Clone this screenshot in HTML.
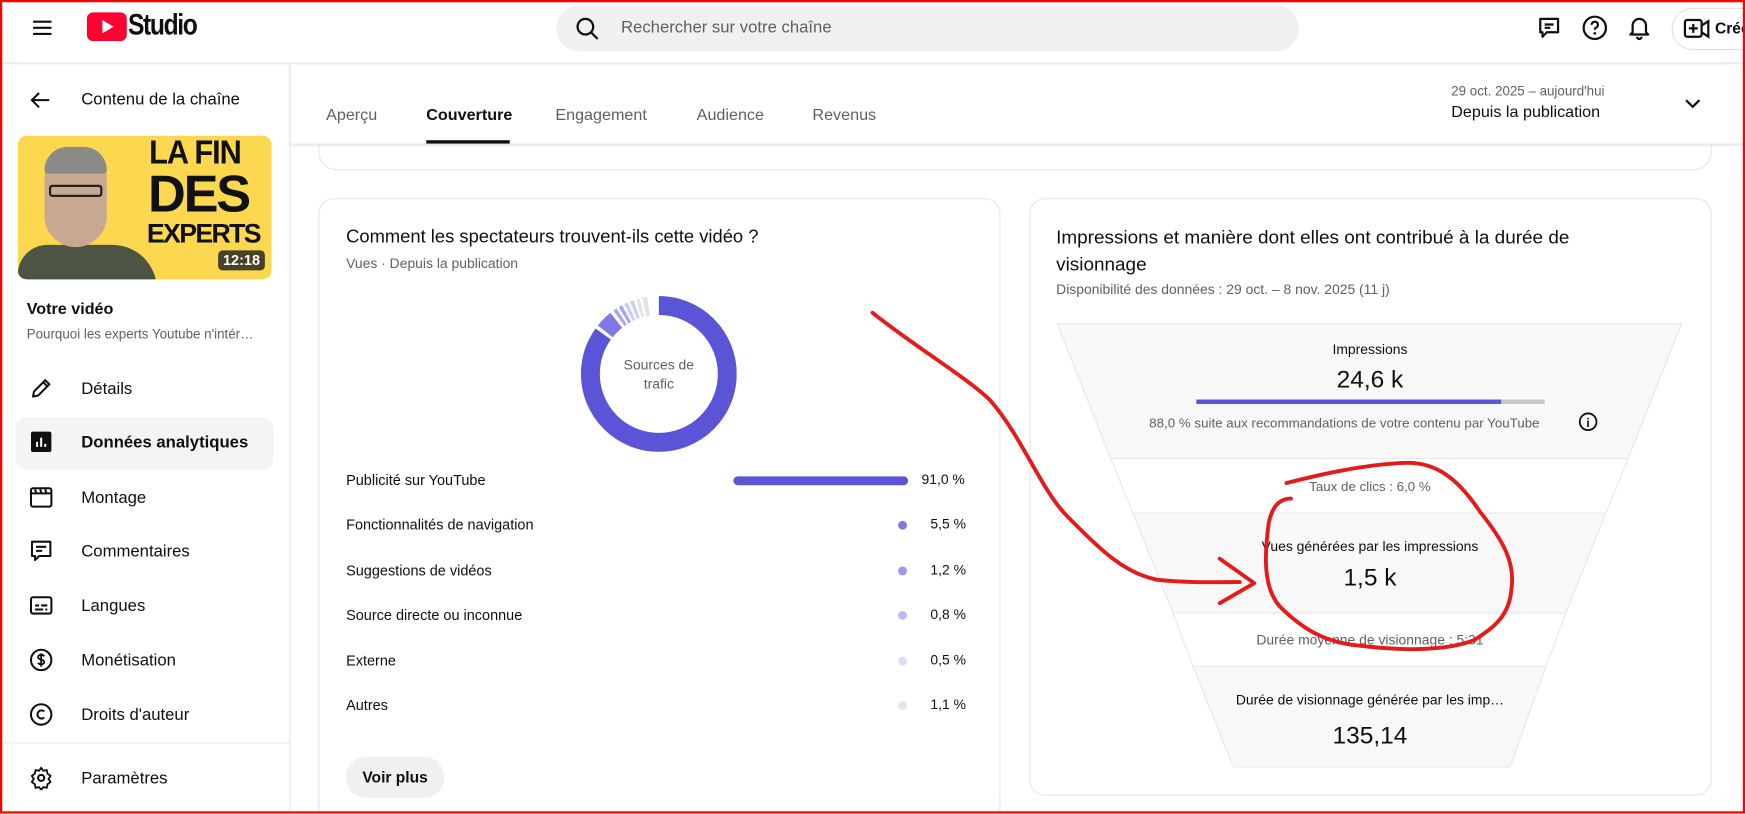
<!DOCTYPE html>
<html><head><meta charset="utf-8">
<style>
*{margin:0;padding:0;box-sizing:border-box}
html,body{width:1745px;height:814px;overflow:hidden;background:#fff}
#w{position:absolute;left:0;top:0;width:1568px;height:731px;transform:scale(1.1129);transform-origin:0 0;font-family:"Liberation Sans",Arial,sans-serif;color:#0f0f0f;background:#fff;overflow:hidden}
.a{position:absolute;white-space:nowrap}
.ic{position:absolute}
.nav{font-size:15px;color:#0f0f0f}
.tab{font-size:14.5px;color:#606060;top:96px}
.card{position:absolute;border:1px solid #e5e5e5;border-radius:14px;background:#fff}
.row{font-size:13px;color:#0f0f0f;left:311px}
.pct{font-size:12.5px;color:#0f0f0f;right:702px;text-align:right}
.dot{position:absolute;width:8px;height:8px;border-radius:50%;left:807px}
</style></head><body><div id="w">

<!-- header -->
<div class="a" style="left:0;top:0;width:1568px;height:57px;border-bottom:1px solid #e8e8e8;box-shadow:0 1px 3px rgba(0,0,0,.08)"></div>
<svg class="ic" style="left:27px;top:14px" width="22" height="22" viewBox="0 0 24 24"><path d="M3 6h18M3 12h18M3 18h18" stroke="#0f0f0f" stroke-width="2"/></svg>
<svg class="ic" style="left:78px;top:11px" width="36" height="26" viewBox="0 0 36 26"><rect width="36" height="26" rx="6" fill="#ff0033"/><path d="M14 7l10 6-10 6z" fill="#fff"/></svg>
<div class="a" style="left:115px;top:7px;font-size:27px;font-weight:bold;letter-spacing:-1.5px;transform:scaleX(.82);transform-origin:0 0">Studio</div>
<div class="a" style="left:500px;top:5px;width:667px;height:41px;border-radius:21px;background:#f0f0f0"></div>
<svg class="ic" style="left:516px;top:14px" width="24" height="24" viewBox="0 0 24 24"><circle cx="10" cy="10" r="7" stroke="#0f0f0f" stroke-width="2" fill="none"/><path d="M15 15l6 6" stroke="#0f0f0f" stroke-width="2"/></svg>
<div class="a" style="left:558px;top:16px;font-size:15px;color:#606060">Rechercher sur votre chaîne</div>
<svg class="ic" style="left:1380px;top:13px" width="24" height="24" viewBox="0 0 24 24"><path d="M4 4h16v12H10l-4 4v-4H4z" fill="none" stroke="#0f0f0f" stroke-width="2" stroke-linejoin="round"/><path d="M8 9h8M8 12h5" stroke="#0f0f0f" stroke-width="2"/></svg>
<svg class="ic" style="left:1421px;top:13px" width="24" height="24" viewBox="0 0 24 24"><circle cx="12" cy="12" r="10" fill="none" stroke="#0f0f0f" stroke-width="2"/><path d="M9.2 9.3a2.8 2.8 0 1 1 3.8 2.6c-.8.4-1 1-1 1.8" fill="none" stroke="#0f0f0f" stroke-width="2"/><circle cx="12" cy="17" r="1.2" fill="#0f0f0f"/></svg>
<svg class="ic" style="left:1461px;top:12px" width="24" height="26" viewBox="0 0 24 26"><path d="M6 17V11a6 6 0 0 1 12 0v6l2 2H4z" fill="none" stroke="#0f0f0f" stroke-width="2" stroke-linejoin="round"/><path d="M10 21a2 2 0 0 0 4 0" fill="none" stroke="#0f0f0f" stroke-width="2"/></svg>
<div class="a" style="left:1502px;top:7px;width:90px;height:38px;border:1px solid #e0e0e0;border-radius:19px"></div>
<svg class="ic" style="left:1512px;top:15px" width="26" height="22" viewBox="0 0 26 22"><rect x="2" y="3" width="15" height="15" rx="2" fill="none" stroke="#0f0f0f" stroke-width="2"/><path d="M17 8l6-4v14l-6-4M9.5 6.5v8M5.5 10.5h8" fill="none" stroke="#0f0f0f" stroke-width="2"/></svg>
<div class="a" style="left:1541px;top:17px;font-size:14px;font-weight:bold">Créer</div>

<!-- sidebar -->
<div class="a" style="left:260px;top:57px;width:1px;height:680px;background:#e5e5e5"></div>
<svg class="ic" style="left:25px;top:79px" width="22" height="22" viewBox="0 0 24 24"><path d="M21 12H4M11 5l-7 7 7 7" fill="none" stroke="#0f0f0f" stroke-width="2"/></svg>
<div class="a" style="left:73px;top:81px;font-size:15px">Contenu de la chaîne</div>
<div class="a" style="left:16px;top:122px;width:228px;height:129px;border-radius:8px;background:#fbd84f;overflow:hidden">
 <div style="position:absolute;left:0;top:98px;width:125px;height:40px;background:#4c5443;border-radius:40px 60px 0 0"></div>
 <div style="position:absolute;left:24px;top:14px;width:56px;height:86px;background:#c9a892;border-radius:26px 26px 30px 30px"></div>
 <div style="position:absolute;left:24px;top:10px;width:56px;height:24px;background:#8a8a86;border-radius:26px 26px 4px 4px"></div>
 <div style="position:absolute;left:28px;top:44px;width:48px;height:11px;border:2px solid #222;border-radius:3px"></div>
 <div style="position:absolute;left:118px;top:2px;font:900 30px/27px 'Liberation Sans',sans-serif;color:#111;letter-spacing:-1px;transform:scaleX(.92);transform-origin:0 0">LA FIN</div>
 <div style="position:absolute;left:117px;top:30px;font:900 47px/44px 'Liberation Sans',sans-serif;color:#111;letter-spacing:-2px">DES</div>
 <div style="position:absolute;left:116px;top:76px;font:900 24px/26px 'Liberation Sans',sans-serif;color:#111;letter-spacing:-1.5px">EXPERTS</div>
 <div style="position:absolute;left:180px;top:103px;width:42px;height:18px;background:rgba(40,40,30,.85);border-radius:4px;color:#fff;font:bold 13px/18px 'Liberation Sans',sans-serif;text-align:center">12:18</div>
</div>
<div class="a" style="left:24px;top:270px;font-size:14.5px;font-weight:bold">Votre vidéo</div>
<div class="a" style="left:24px;top:293px;font-size:12px;color:#606060">Pourquoi les experts Youtube n'intér…</div>
<div class="a" style="left:14px;top:375px;width:232px;height:47px;background:#f4f4f4;border-radius:10px"></div>
<svg class="ic" style="left:26px;top:338px" width="22" height="22" viewBox="0 0 24 24"><path d="M4 20l1-5L16 4l4 4L9 19z M14 6l4 4" fill="none" stroke="#0f0f0f" stroke-width="2" stroke-linejoin="round"/></svg>
<div class="a nav" style="left:73px;top:341px">Détails</div>
<svg class="ic" style="left:26px;top:386px" width="22" height="22" viewBox="0 0 24 24"><rect x="2" y="2" width="20" height="20" rx="2" fill="#0f0f0f"/><path d="M8 17v-5M12 17V8M16 17v-3" stroke="#fff" stroke-width="2"/></svg>
<div class="a nav" style="left:73px;top:389px;font-weight:bold">Données analytiques</div>
<svg class="ic" style="left:26px;top:436px" width="22" height="22" viewBox="0 0 24 24"><rect x="2" y="3" width="20" height="18" rx="2" fill="none" stroke="#0f0f0f" stroke-width="2"/><path d="M2 8h20M6 4l1 3M11 4l1 3M16 4l1 3" stroke="#0f0f0f" stroke-width="2"/></svg>
<div class="a nav" style="left:73px;top:439px">Montage</div>
<svg class="ic" style="left:26px;top:484px" width="22" height="22" viewBox="0 0 24 24"><path d="M3 3h18v14H10l-4 4v-4H3z" fill="none" stroke="#0f0f0f" stroke-width="2" stroke-linejoin="round"/><path d="M7 8h10M7 12h6" stroke="#0f0f0f" stroke-width="2"/></svg>
<div class="a nav" style="left:73px;top:487px">Commentaires</div>
<svg class="ic" style="left:26px;top:533px" width="22" height="22" viewBox="0 0 24 24"><rect x="2" y="4" width="20" height="16" rx="2" fill="none" stroke="#0f0f0f" stroke-width="2"/><path d="M6 12h4M12 12h6M6 16h8M16 16h2" stroke="#0f0f0f" stroke-width="2"/></svg>
<div class="a nav" style="left:73px;top:536px">Langues</div>
<svg class="ic" style="left:26px;top:582px" width="22" height="22" viewBox="0 0 24 24"><circle cx="12" cy="12" r="10" fill="none" stroke="#0f0f0f" stroke-width="2"/><path d="M15 8.5c-.5-1-1.5-1.5-3-1.5-2 0-3 1-3 2.3 0 3 6 1.7 6 4.7 0 1.3-1.2 2.3-3 2.3-1.5 0-2.6-.6-3.1-1.6M12 5.5v13" fill="none" stroke="#0f0f0f" stroke-width="1.8"/></svg>
<div class="a nav" style="left:73px;top:585px">Monétisation</div>
<svg class="ic" style="left:26px;top:631px" width="22" height="22" viewBox="0 0 24 24"><circle cx="12" cy="12" r="10" fill="none" stroke="#0f0f0f" stroke-width="2"/><path d="M15 9a4 4 0 1 0 0 6" fill="none" stroke="#0f0f0f" stroke-width="2"/></svg>
<div class="a nav" style="left:73px;top:634px">Droits d'auteur</div>
<div class="a" style="left:0;top:667px;width:260px;height:1px;background:#e5e5e5"></div>
<svg class="ic" style="left:26px;top:688px" width="22" height="22" viewBox="0 0 24 24"><path d="M12 2l2 3 3.5-.7.7 3.5 3 2.2-2 3 2 3-3 2.2-.7 3.5-3.5-.7-2 3-2-3-3.5.7-.7-3.5-3-2.2 2-3-2-3 3-2.2.7-3.5L10 5z" fill="none" stroke="#0f0f0f" stroke-width="1.8" stroke-linejoin="round"/><circle cx="12" cy="12" r="3" fill="none" stroke="#0f0f0f" stroke-width="2"/></svg>
<div class="a nav" style="left:73px;top:691px">Paramètres</div>

<!-- partial card -->
<div class="card" style="left:286px;top:120px;width:1252px;height:33px;border-top:none;border-radius:0 0 16px 16px"></div>

<!-- tabs -->
<div class="a" style="left:261px;top:58px;width:1307px;height:72px;background:#fff;border-bottom:1px solid #e5e5e5;box-shadow:0 1px 3px rgba(0,0,0,.08)"></div>
<div class="a tab" style="left:293px">Aperçu</div>
<div class="a tab" style="left:383px;color:#0f0f0f;font-weight:bold">Couverture</div>
<div class="a" style="left:383px;top:126px;width:75px;height:3px;background:#0f0f0f"></div>
<div class="a tab" style="left:499px">Engagement</div>
<div class="a tab" style="left:626px">Audience</div>
<div class="a tab" style="left:730px">Revenus</div>
<div class="a" style="left:1304px;top:75px;font-size:12px;color:#606060">29 oct. 2025 – aujourd'hui</div>
<div class="a" style="left:1304px;top:93px;font-size:14.5px">Depuis la publication</div>
<svg class="ic" style="left:1512px;top:85px" width="18" height="16" viewBox="0 0 18 16"><path d="M3 5l6 6 6-6" fill="none" stroke="#0f0f0f" stroke-width="2"/></svg>

<!-- left card -->
<div class="card" style="left:286px;top:178px;width:613px;height:580px"></div>
<div class="a" style="left:311px;top:204px;font-size:16.5px">Comment les spectateurs trouvent-ils cette vidéo ?</div>
<div class="a" style="left:311px;top:230px;font-size:12.5px;color:#606060">Vues · Depuis la publication</div>
<svg class="ic" style="left:522px;top:266px" width="140" height="140" viewBox="-70 -70 140 140">
 <g transform="rotate(-90)">
 <circle r="61.5" fill="none" stroke="#5b54d6" stroke-width="17" stroke-dasharray="328 400" />
 <circle r="61.5" fill="none" stroke="#7e78e0" stroke-width="17" stroke-dasharray="0 331 14 400"/>
 <circle r="61.5" fill="none" stroke="#aaa6ec" stroke-width="17" stroke-dasharray="0 348 3 2 3 400"/>
 <circle r="61.5" fill="none" stroke="#cfcdf5" stroke-width="17" stroke-dasharray="0 358 3 2 3 400"/>
 <circle r="61.5" fill="none" stroke="#e4e4e8" stroke-width="17" stroke-dasharray="0 368 3 2 4 400"/>
 </g>
 <text x="0" y="-4" text-anchor="middle" font-family="Liberation Sans" font-size="12.5" fill="#606060">Sources de</text>
 <text x="0" y="13" text-anchor="middle" font-family="Liberation Sans" font-size="12.5" fill="#606060">trafic</text>
</svg>
<div class="a row" style="top:424px">Publicité sur YouTube</div>
<div class="a" style="left:659px;top:428px;width:157px;height:8px;border-radius:4px;background:#5b54d6"></div>
<div class="a pct" style="left:828px;top:424px">91,0 %</div>
<div class="a row" style="top:464px">Fonctionnalités de navigation</div><div class="dot" style="top:468px;background:#7e78e0"></div><div class="a pct" style="left:836px;top:464px">5,5 %</div>
<div class="a row" style="top:505px">Suggestions de vidéos</div><div class="dot" style="top:509px;background:#9d98e8"></div><div class="a pct" style="left:836px;top:505px">1,2 %</div>
<div class="a row" style="top:545px">Source directe ou inconnue</div><div class="dot" style="top:549px;background:#bcb9f0"></div><div class="a pct" style="left:836px;top:545px">0,8 %</div>
<div class="a row" style="top:586px">Externe</div><div class="dot" style="top:590px;background:#dddcf7"></div><div class="a pct" style="left:836px;top:586px">0,5 %</div>
<div class="a row" style="top:626px">Autres</div><div class="dot" style="top:630px;background:#e4e4e4"></div><div class="a pct" style="left:836px;top:626px">1,1 %</div>
<div class="a" style="left:311px;top:680px;width:88px;height:37px;border-radius:18px;background:#f0f0f0;font-size:14px;font-weight:bold;text-align:center;line-height:37px">Voir plus</div>

<!-- right card -->
<div class="card" style="left:925px;top:178px;width:613px;height:537px"></div>
<div class="a" style="left:949px;top:202px;font-size:17px;line-height:24px;white-space:normal;width:500px">Impressions et manière dont elles ont contribué à la durée de visionnage</div>
<div class="a" style="left:949px;top:253px;font-size:12.5px;color:#606060">Disponibilité des données : 29 oct. – 8 nov. 2025 (11 j)</div>
<svg class="ic" style="left:925px;top:280px" width="613" height="420" viewBox="925 280 613 420" font-family="Liberation Sans">
 <polygon points="950,291 1511,291 1463,412 998,412" fill="#f8f8f8" stroke="#e8e8e8"/>
 <polygon points="998,412 1463,412 1443,461 1018,461" fill="#fff" stroke="#e8e8e8"/>
 <polygon points="1018,461 1443,461 1407,551 1054,551" fill="#f8f8f8" stroke="#e8e8e8"/>
 <polygon points="1054,551 1407,551 1389,599 1072,599" fill="#fff" stroke="#e8e8e8"/>
 <polygon points="1072,599 1389,599 1357,689 1108,689" fill="#f8f8f8" stroke="#e8e8e8"/>
 <text x="1231" y="318" text-anchor="middle" font-size="12.5" fill="#0f0f0f">Impressions</text>
 <text x="1231" y="348" text-anchor="middle" font-size="22" fill="#0f0f0f">24,6 k</text>
 <rect x="1075" y="359" width="274" height="4" fill="#5b54d6"/><rect x="1349" y="359" width="39" height="4" fill="#c8c8c8"/>
 <text x="1208" y="384" text-anchor="middle" font-size="12" fill="#606060">88,0 % suite aux recommandations de votre contenu par YouTube</text>
 <circle cx="1427" cy="379" r="7.5" fill="none" stroke="#0f0f0f" stroke-width="1.6"/><text x="1427" y="383.5" text-anchor="middle" font-size="11" font-weight="bold" fill="#0f0f0f">i</text>
 <text x="1231" y="441" text-anchor="middle" font-size="12" fill="#606060">Taux de clics : 6,0 %</text>
 <text x="1231" y="495" text-anchor="middle" font-size="12.5" fill="#0f0f0f">Vues générées par les impressions</text>
 <text x="1231" y="526" text-anchor="middle" font-size="22" fill="#0f0f0f">1,5 k</text>
 <text x="1231" y="579" text-anchor="middle" font-size="12.5" fill="#606060">Durée moyenne de visionnage : 5:31</text>
 <text x="1231" y="633" text-anchor="middle" font-size="12.5" fill="#0f0f0f">Durée de visionnage générée par les imp…</text>
 <text x="1231" y="668" text-anchor="middle" font-size="22" fill="#0f0f0f">135,14</text>
</svg>

<!-- red annotations -->
<svg class="ic" style="left:0;top:0" width="1568" height="731" viewBox="0 0 1568 731" fill="none" stroke="#e41b1b" stroke-width="3.5" stroke-linecap="round" stroke-linejoin="round">
 <path d="M784 281 C820 310 870 340 890 360 C920 395 935 440 960 465 C990 495 1010 515 1040 521 C1070 524 1095 523 1114 523"/>
 <path d="M1096 502 L1127 524 L1096 542"/>
 <path d="M1156 434 C1180 428 1220 418 1260 416 C1290 414 1310 430 1330 460 C1350 485 1362 505 1358 530 C1356 555 1340 565 1325 575 C1300 585 1260 585 1220 580 C1190 577 1170 565 1150 545 C1135 528 1136 500 1140 470 C1143 455 1150 448 1160 448"/>
</svg>

<!-- red frame -->
<div class="a" style="left:0;top:0;width:1568px;height:731px;border:2px solid #f00"></div>
</div></body></html>
